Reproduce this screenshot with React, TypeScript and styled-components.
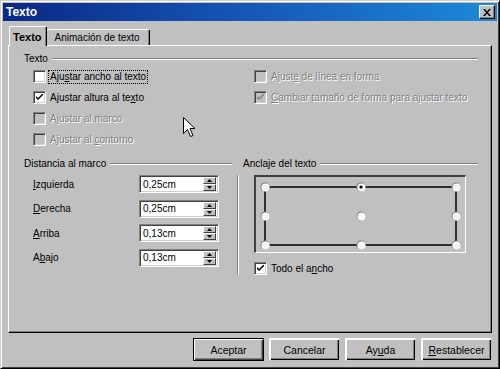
import React from "react";
import styled, { createGlobalStyle } from "styled-components";

const Global = createGlobalStyle`
  html, body { margin: 0; padding: 0; background: #c0c0c0; }
  body { font-family: "Liberation Sans", Arial, sans-serif; font-size: 10px; color: #000; }
  * { box-sizing: border-box; }
`;

const Window = styled.div`
  position: relative;
  width: 500px;
  height: 369px;
  background: #c0c0c0;
  padding: 3px;
  display: flex;
  flex-direction: column;
  border-top: 1px solid #d4d0c8;
  border-left: 1px solid #d4d0c8;
  border-right: 1px solid #000;
  border-bottom: 1px solid #000;
  box-shadow: inset 1px 1px #fff, inset -1px -1px #404040;
`;

const TitleBar = styled.div`
  height: 18px;
  margin-top: -1px;
  margin-left: -1px;
  margin-right: -1px;
  background: linear-gradient(to right, #0a2886 0%, #1658b8 50%, #1c8ad8 100%);
  display: flex;
  align-items: center;
  justify-content: space-between;
  padding: 0 2px 0 3px;
`;

const Title = styled.span`
  color: #fff;
  font-weight: bold;
  font-size: 12px;
`;

const CloseButton = styled.div`
  width: 16px;
  height: 14px;
  background: #c0c0c0;
  border-top: 1px solid #fff;
  border-left: 1px solid #fff;
  border-right: 1px solid #000;
  border-bottom: 1px solid #000;
  box-shadow: inset -1px -1px #808080;
  display: flex;
  align-items: center;
  justify-content: center;
`;

const Body = styled.div`
  flex: 1;
  padding: 5px 4px 0 4px;
  display: flex;
  flex-direction: column;
`;

const TabRow = styled.div`
  display: flex;
  align-items: flex-end;
  height: 19px;
  padding-left: 1px;
  position: relative;
  z-index: 1;
`;

const Tab = styled.div<{ $active?: boolean }>`
  height: ${(p) => (p.$active ? "20px" : "16px")};
  margin-bottom: ${(p) => (p.$active ? "-1px" : "0")};
  padding: 0 ${(p) => (p.$active ? "4px" : "9px")} 0 ${(p) => (p.$active ? "3px" : "8px")};
  font-weight: ${(p) => (p.$active ? "bold" : "normal")};
  font-size: ${(p) => (p.$active ? "11px" : "10px")};
  background: #c0c0c0;
  border-top: 1px solid #fff;
  border-left: ${(p) => (p.$active ? "1px solid #fff" : "none")};
  border-right: 1px solid #000;
  box-shadow: inset -1px 0 #808080;
  border-radius: 2px 2px 0 0;
  display: flex;
  align-items: center;
`;

const Panel = styled.div`
  height: 288px;
  border-top: 1px solid #fff;
  border-left: 1px solid #fff;
  border-right: 1px solid #000;
  border-bottom: 1px solid #000;
  box-shadow: inset -1px -1px #808080;
  padding: 7px 13px 0 15px;
  display: flex;
  flex-direction: column;
`;

const GroupHeader = styled.div`
  display: flex;
  align-items: center;
  height: 12px;
  line-height: 12px;
`;

const GroupLine = styled.div`
  flex: 1;
  margin-left: 4px;
  height: 2px;
  border-top: 1px solid #808080;
  border-bottom: 1px solid #fff;
`;

const CheckGrid = styled.div`
  display: grid;
  grid-template-columns: 221px 1fr;
  grid-auto-rows: 21px;
  margin: 1px 0 0 9px;
`;

const CheckRow = styled.label<{ $disabled?: boolean }>`
  display: flex;
  align-items: center;
  gap: 3px;
  color: ${(p) => (p.$disabled ? "#808080" : "#000")};
  text-shadow: ${(p) => (p.$disabled ? "1px 1px 0 #fff" : "none")};
  white-space: nowrap;
`;

const Box = styled.span<{ $disabled?: boolean }>`
  width: 13px;
  height: 13px;
  flex: none;
  background: ${(p) => (p.$disabled ? "#c0c0c0" : "#fff")};
  border-top: 1px solid #808080;
  border-left: 1px solid #808080;
  border-right: 1px solid #fff;
  border-bottom: 1px solid #fff;
  box-shadow: inset 1px 1px #404040, inset -1px -1px #d4d0c8;
  display: flex;
  align-items: center;
  justify-content: center;
`;

const Caption = styled.span<{ $focus?: boolean }>`
  padding: 0 1px;
  outline: ${(p) => (p.$focus ? "1px dotted #000" : "none")};
  line-height: 12px;
`;

const Lower = styled.div`
  display: flex;
  margin-top: 8px;
`;

const LeftCol = styled.div`
  width: 208px;
  display: flex;
  flex-direction: column;
`;

const SepCol = styled.div`
  width: 11px;
  display: flex;
  justify-content: center;
  padding-top: 17px;
`;

const VLine = styled.div`
  width: 2px;
  height: 100px;
  border-left: 1px solid #808080;
  border-right: 1px solid #fff;
`;

const RightCol = styled.div`
  flex: 1;
  display: flex;
  flex-direction: column;
`;

const SpinList = styled.div`
  display: flex;
  flex-direction: column;
  gap: 6.6px;
  margin: 5px 0 0 9px;
`;

const SpinRow = styled.div`
  display: flex;
  align-items: center;
  height: 18px;
`;

const SpinLabel = styled.span`
  width: 106px;
`;

const SpinField = styled.div`
  width: 80px;
  height: 18px;
  background: #fff;
  border-top: 1px solid #808080;
  border-left: 1px solid #808080;
  border-right: 1px solid #fff;
  border-bottom: 1px solid #fff;
  box-shadow: inset 1px 1px #404040, inset -1px -1px #d4d0c8;
  display: flex;
  align-items: center;
  justify-content: space-between;
  padding: 0 2px 0 3px;
`;

const SpinButtons = styled.div`
  display: flex;
  flex-direction: column;
  width: 13px;
  height: 14px;
`;

const SpinBtn = styled.div`
  flex: 1;
  background: #c0c0c0;
  border-top: 1px solid #fff;
  border-left: 1px solid #fff;
  border-right: 1px solid #404040;
  border-bottom: 1px solid #404040;
  display: flex;
  align-items: center;
  justify-content: center;
`;

const AnchorBox = styled.div`
  width: 212px;
  height: 78px;
  margin: 5px 0 0 11px;
  border-top: 2px solid #404040;
  border-left: 2px solid #404040;
  border-right: 1px solid #fff;
  border-bottom: 1px solid #fff;
`;

const WideRow = styled(CheckRow)`
  margin: 9px 0 0 11px;
  height: 13px;
`;

const ButtonBar = styled.div`
  display: flex;
  justify-content: flex-end;
  gap: 5px;
  margin-top: 5px;
`;

const Button = styled.div<{ $default?: boolean }>`
  width: 71px;
  height: 23px;
  display: flex;
  align-items: center;
  justify-content: center;
  background: #c0c0c0;
  border: 1px solid ${(p) => (p.$default ? "#000" : "transparent")};
  box-shadow: ${(p) =>
    p.$default
      ? "inset 1px 1px #fff, inset -1px -1px #404040, inset -2px -2px #808080"
      : "inset 1px 1px #fff, inset -1px -1px #000, inset -2px -2px #808080"};
  ${(p) => (!p.$default ? "border-top-color:#fff;border-left-color:#fff;" : "")}
  font-size: 10.5px;
`;

const Cursor = styled.svg`
  position: absolute;
  left: 182px;
  top: 116px;
`;

const Check = ({ gray }: { gray?: boolean }) => (
  <svg width="7" height="7" viewBox="0 0 7 7">
    <path d="M0 2 L0 4 L2 6 L7 1 L7 -1 L2 4 Z" fill={gray ? "#808080" : "#000"} />
  </svg>
);

const U = styled.span`
  text-decoration: underline;
`;

const ArrowUp = () => (
  <svg width="5" height="3" viewBox="0 0 5 3">
    <path d="M2.5 0 L5 3 L0 3 Z" fill="#000" />
  </svg>
);
const ArrowDown = () => (
  <svg width="5" height="3" viewBox="0 0 5 3">
    <path d="M0 0 L5 0 L2.5 3 Z" fill="#000" />
  </svg>
);

function Spin({ label, value }: { label: React.ReactNode; value: string }) {
  return (
    <SpinRow>
      <SpinLabel>{label}</SpinLabel>
      <SpinField>
        <span>{value}</span>
        <SpinButtons>
          <SpinBtn>
            <ArrowUp />
          </SpinBtn>
          <SpinBtn>
            <ArrowDown />
          </SpinBtn>
        </SpinButtons>
      </SpinField>
    </SpinRow>
  );
}

function Item({
  checked,
  disabled,
  focus,
  children,
}: {
  checked?: boolean;
  disabled?: boolean;
  focus?: boolean;
  children: React.ReactNode;
}) {
  return (
    <CheckRow $disabled={disabled}>
      <Box $disabled={disabled}>{checked && <Check gray={disabled} />}</Box>
      <Caption $focus={focus}>{children}</Caption>
    </CheckRow>
  );
}

const dotsX = [9, 105, 200];
const dotsY = [10, 39, 68];

function AnchorDrawing() {
  return (
    <svg width="209" height="75" viewBox="0 0 209 75">
      <rect x="9" y="10" width="191" height="58" fill="none" stroke="#303030" strokeWidth="2" />
      {dotsY.map((y) =>
        dotsX.map((x) =>
          x === 105 && y === 39 ? null : (
            <g key={`${x}-${y}`}>
              <circle cx={x} cy={y} r="4.5" fill="#808080" />
              <circle cx={x + 0.5} cy={y + 0.5} r="4" fill="#fff" />
              <circle cx={x + 0.8} cy={y + 0.8} r="3.2" fill="#f4f4f4" />
            </g>
          )
        )
      )}
      <circle cx="105" cy="39" r="4.5" fill="#808080" />
      <circle cx="105.5" cy="39.5" r="4" fill="#fff" />
      <circle cx="105" cy="10" r="1.6" fill="#000" />
    </svg>
  );
}

export default function App() {
  return (
    <>
      <Global />
      <Window>
        <TitleBar>
          <Title>Texto</Title>
          <CloseButton>
            <svg width="8" height="7" viewBox="0 0 8 7">
              <path d="M0 0 L2 0 L4 2.5 L6 0 L8 0 L5 3.5 L8 7 L6 7 L4 4.5 L2 7 L0 7 L3 3.5 Z" fill="#000" />
            </svg>
          </CloseButton>
        </TitleBar>
        <Body>
          <TabRow>
            <Tab $active>Texto</Tab>
            <Tab>Animación de texto</Tab>
          </TabRow>
          <Panel>
            <GroupHeader>
              <span>Texto</span>
              <GroupLine />
            </GroupHeader>
            <CheckGrid>
              <Item focus>
                Aju<U>s</U>tar ancho al texto
              </Item>
              <Item disabled>
                Ajust<U>e</U> de línea en forma
              </Item>
              <Item checked>
                Ajustar altura al te<U>x</U>to
              </Item>
              <Item checked disabled>
                <U>C</U>ambiar tamaño de forma para ajustar texto
              </Item>
              <Item disabled>
                A<U>j</U>ustar al marco
              </Item>
              <span />
              <Item disabled>
                Ajustar al <U>c</U>ontorno
              </Item>
              <span />
            </CheckGrid>
            <Lower>
              <LeftCol>
                <GroupHeader>
                  <span>Distancia al marco</span>
                  <GroupLine />
                </GroupHeader>
                <SpinList>
                  <Spin label={<><U>I</U>zquierda</>} value="0,25cm" />
                  <Spin label={<><U>D</U>erecha</>} value="0,25cm" />
                  <Spin label={<><U>A</U>rriba</>} value="0,13cm" />
                  <Spin label={<>A<U>b</U>ajo</>} value="0,13cm" />
                </SpinList>
              </LeftCol>
              <SepCol>
                <VLine />
              </SepCol>
              <RightCol>
                <GroupHeader>
                  <span>Anclaje del texto</span>
                  <GroupLine />
                </GroupHeader>
                <AnchorBox>
                  <AnchorDrawing />
                </AnchorBox>
                <WideRow>
                  <Box>
                    <Check />
                  </Box>
                  <Caption>
                    Todo el a<U>n</U>cho
                  </Caption>
                </WideRow>
              </RightCol>
            </Lower>
          </Panel>
          <ButtonBar>
            <Button $default>Aceptar</Button>
            <Button>Cancelar</Button>
            <Button>
              Ay<U>u</U>da
            </Button>
            <Button>
              <U>R</U>establecer
            </Button>
          </ButtonBar>
        </Body>
        <Cursor width="13" height="21" viewBox="0 0 13 21">
          <path d="M0.5 0.5 L0.5 16.5 L4.5 12.5 L7.5 19.5 L10 18.5 L7 11.5 L12 11.5 Z" fill="#fff" stroke="#000" strokeWidth="1" />
        </Cursor>
      </Window>
    </>
  );
}
